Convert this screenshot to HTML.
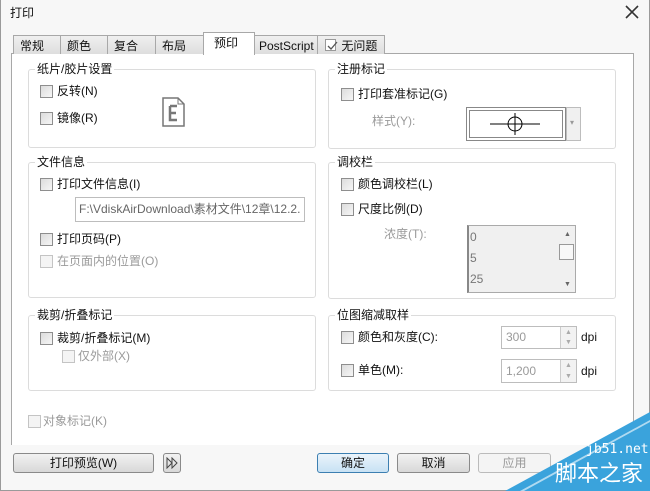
<!DOCTYPE html>
<html><head><meta charset="utf-8"><style>
*{box-sizing:border-box}
body{margin:0;width:650px;height:491px;overflow:hidden;background:#f7f7f7;font-family:"Liberation Sans","Noto Sans CJK SC",sans-serif;font-size:12px;color:#111;position:relative}
.a{position:absolute}
.win{left:0;top:0;width:650px;height:491px;border:1px solid #9a9a9a;border-top:none}
.tab{position:absolute;top:35px;height:19px;border:1px solid #a8a8a8;border-bottom:none;background:linear-gradient(#f0f0f0,#dedede);padding:3px 0 0 6px;font-size:12px;line-height:14px}
.panel{left:11px;top:53px;width:623px;height:392px;background:#fff;border:1px solid #a8a8a8;border-bottom:none}
.grp{position:absolute;border:1px solid #dcdcdc;border-radius:3px}
.gt{position:absolute;top:-9px;left:6px;background:#fff;padding:0 2px;line-height:16px}
.cb{position:absolute;width:13px;height:13px;border:1px solid #8e8e8e;background:linear-gradient(135deg,#dcdcdc,#f6f6f6)}
.cb.d{border-color:#c4c4c4;background:#f4f4f4}
.t{position:absolute;line-height:14px;white-space:nowrap}
.g{color:#9a9a9a}
.btn{position:absolute;height:20px;border:1px solid #8a8a8a;border-radius:3px;background:linear-gradient(#f2f2f2,#d8d8d8);text-align:center;line-height:18px}
.in{position:absolute;border:1px solid #bdbdbd;background:#fff}
.ar{position:absolute;font-size:7px;color:#666;line-height:8px}
</style></head><body>
<div class="a win"></div>
<div class="t" style="left:10px;top:6px">打印</div>
<svg class="a" style="left:625px;top:5px" width="14" height="14"><path d="M1 1L13 13M13 1L1 13" stroke="#333" stroke-width="1.6"/></svg>
<div class="a panel"></div>
<div class="tab" style="left:13px;width:48px">常规</div>
<div class="tab" style="left:60px;width:48px">颜色</div>
<div class="tab" style="left:107px;width:49px">复合</div>
<div class="tab" style="left:155px;width:49px">布局</div>
<div class="tab" style="left:203px;top:32px;height:23px;width:52px;background:#fff;padding:3px 0 0 10px">预印</div>
<div class="tab" style="left:254px;width:64px;padding-left:4px">PostScript</div>
<div class="tab" style="left:317px;width:68px;padding-left:7px"><svg width="13" height="13" style="vertical-align:-2px"><rect x="0.5" y="0.5" width="10" height="11" fill="#fff" stroke="#999"/><path d="M3 7L6 10L12 3" fill="none" stroke="#555" stroke-width="1.3"/></svg> 无问题</div>

<div class="grp" style="left:28px;top:69px;width:288px;height:79px"><div class="gt">纸片/胶片设置</div></div>
<div class="cb" style="left:40px;top:85px"></div><div class="t" style="left:57px;top:84px">反转(N)</div>
<div class="cb" style="left:40px;top:112px"></div><div class="t" style="left:57px;top:111px">镜像(R)</div>
<svg class="a" style="left:162px;top:97px" width="24" height="30"><path d="M1 1H16L22 7V29H1Z" fill="#fff" stroke="#777" stroke-width="1.5"/><path d="M16 1V7H22" fill="none" stroke="#777"/><path d="M8 9H15M8 9V23H15M8 16H14" fill="none" stroke="#777" stroke-width="2.5"/></svg>

<div class="grp" style="left:328px;top:69px;width:288px;height:80px;"><div class="gt">注册标记</div></div>
<div class="cb" style="left:341px;top:88px"></div><div class="t" style="left:358px;top:87px">打印套准标记(G)</div>
<div class="t g" style="left:372px;top:114px">样式(Y):</div>
<div class="in" style="left:466px;top:107px;width:100px;height:34px;border-color:#888;box-shadow:inset 0 0 0 2px #fff,inset 0 0 0 3px #888"></div>
<svg class="a" style="left:486px;top:110px" width="58" height="28"><path d="M4 14H54M29 3V25" stroke="#000"/><circle cx="29" cy="14" r="7" fill="none" stroke="#000"/></svg>
<div class="in" style="left:566px;top:107px;width:15px;height:34px;background:#f0f0f0"></div>
<div class="t g" style="left:570px;top:116px;font-size:8px">▾</div>

<div class="grp" style="left:28px;top:162px;width:288px;height:136px"><div class="gt">文件信息</div></div>
<div class="cb" style="left:40px;top:178px"></div><div class="t" style="left:57px;top:177px">打印文件信息(I)</div>
<div class="in" style="left:75px;top:197px;width:230px;height:25px"></div><div class="t g" style="left:79px;top:202px;color:#666">F:\VdiskAirDownload\素材文件\12章\12.2.</div>
<div class="cb" style="left:40px;top:233px"></div><div class="t" style="left:57px;top:232px">打印页码(P)</div>
<div class="cb d" style="left:40px;top:255px"></div><div class="t g" style="left:57px;top:254px">在页面内的位置(O)</div>

<div class="grp" style="left:328px;top:162px;width:288px;height:137px"><div class="gt">调校栏</div></div>
<div class="cb" style="left:341px;top:178px"></div><div class="t" style="left:358px;top:177px">颜色调校栏(L)</div>
<div class="cb" style="left:341px;top:203px"></div><div class="t" style="left:358px;top:202px">尺度比例(D)</div>
<div class="t g" style="left:384px;top:227px">浓度(T):</div>
<div class="in" style="left:467px;top:225px;width:109px;height:68px;background:#f0f0f0;border-color:#aaa;border-left:2px solid #888"></div>
<div class="t g" style="left:470px;top:230px;color:#777">0</div>
<div class="t g" style="left:470px;top:251px;color:#777">5</div>
<div class="t g" style="left:470px;top:272px;color:#777">25</div>
<div class="ar" style="left:564px;top:231px">▲</div>
<div class="a" style="left:559px;top:244px;width:15px;height:16px;border:1px solid #999;background:#f8f8f8"></div>
<div class="ar" style="left:564px;top:281px">▼</div>

<div class="grp" style="left:28px;top:315px;width:288px;height:76px"><div class="gt">裁剪/折叠标记</div></div>
<div class="cb" style="left:40px;top:332px"></div><div class="t" style="left:57px;top:331px">裁剪/折叠标记(M)</div>
<div class="cb d" style="left:62px;top:350px"></div><div class="t g" style="left:78px;top:349px">仅外部(X)</div>

<div class="grp" style="left:328px;top:315px;width:288px;height:76px"><div class="gt">位图缩减取样</div></div>
<div class="cb" style="left:341px;top:331px"></div><div class="t" style="left:358px;top:330px">颜色和灰度(C):</div>
<div class="in" style="left:501px;top:326px;width:76px;height:23px"></div><div class="t g" style="left:506px;top:330px">300</div>
<div class="a" style="left:560px;top:327px;width:16px;height:21px;border-left:1px solid #ccc;background:#f2f2f2"></div>
<div class="ar" style="left:565px;top:329px;color:#aaa">▲</div><div class="ar" style="left:565px;top:339px;color:#aaa">▼</div>
<div class="t" style="left:581px;top:330px">dpi</div>
<div class="cb" style="left:341px;top:364px"></div><div class="t" style="left:358px;top:363px">单色(M):</div>
<div class="in" style="left:501px;top:359px;width:76px;height:24px"></div><div class="t g" style="left:506px;top:364px">1,200</div>
<div class="a" style="left:560px;top:360px;width:16px;height:22px;border-left:1px solid #ccc;background:#f2f2f2"></div>
<div class="ar" style="left:565px;top:362px;color:#aaa">▲</div><div class="ar" style="left:565px;top:373px;color:#aaa">▼</div>
<div class="t" style="left:581px;top:364px">dpi</div>

<div class="cb d" style="left:28px;top:415px"></div><div class="t g" style="left:43px;top:414px">对象标记(K)</div>

<div class="btn" style="left:13px;top:453px;width:141px">打印预览(W)</div>
<div class="btn" style="left:163px;top:453px;width:18px"><svg width="12" height="12" style="margin-top:3px"><path d="M1 1L6 6L1 11ZM6 1L11 6L6 11Z" fill="none" stroke="#444"/></svg></div>
<div class="btn" style="left:317px;top:453px;width:72px;border-color:#3c7fb1;background:linear-gradient(#eaf4fb,#c8e2f4)">确定</div>
<div class="btn" style="left:397px;top:453px;width:73px">取消</div>
<div class="btn" style="left:478px;top:453px;width:73px;color:#999;border-color:#bbb;background:#f4f4f4">应用</div>

<svg class="a" style="left:0;top:0" width="650" height="491"><polygon points="505,491 650,412 650,491" fill="#3aa3dc"/><polygon points="520,491 650,420 650,422 524,491" fill="#fff" opacity=".6"/></svg>
<div class="t" style="left:586px;top:443px;color:#fff;font-family:'DejaVu Sans Mono',monospace;font-size:13px">jb51.net</div>
<div class="t" style="left:555px;top:462px;color:#fff;font-size:22px;line-height:24px">脚本之家</div>
</body></html>
